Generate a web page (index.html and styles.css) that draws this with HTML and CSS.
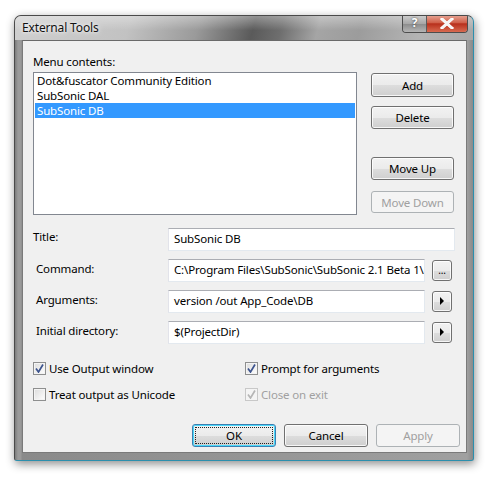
FILE: index.html
```html
<!DOCTYPE html>
<html>
<head>
<meta charset="utf-8">
<link rel="stylesheet" href="styles.css">
</head>
<body>
<div class="window">
  <div class="titlebar">
    <span class="title">External Tools</span>
    <div class="caption">
      <div class="cap-help">?</div>
      <div class="cap-close"><svg width="14" height="11" viewBox="0 0 14 11"><path d="M2 1 L12 10 M12 1 L2 10" stroke="#fff" stroke-width="3" stroke-linecap="square"/><path d="M2 1 L12 10 M12 1 L2 10" stroke="#f4f4f4" stroke-width="2"/></svg></div>
    </div>
  </div>
  <div class="frame">
    <div class="client">
      <div class="top">
        <div class="lbl menu-lbl">Menu contents:</div>
        <div class="listbox">
          <div class="item">Dot&amp;fuscator Community Edition</div>
          <div class="item">SubSonic DAL</div>
          <div class="item sel">SubSonic DB</div>
        </div>
        <div class="sidebtns">
          <div class="btn b-add">Add</div>
          <div class="btn b-del">Delete</div>
          <div class="btn b-up">Move Up</div>
          <div class="btn disabled b-down">Move Down</div>
        </div>
      </div>
      <div class="form">
        <div class="lbl flbl first">Title:</div>
        <div class="input wide">SubSonic DB</div>
        <div class="lbl flbl">Command:</div>
        <div class="input">C:\Program Files\SubSonic\SubSonic 2.1 Beta 1\</div>
        <div class="btn small">...</div>
        <div class="lbl flbl">Arguments:</div>
        <div class="input">version /out App_Code\DB</div>
        <div class="btn small"><svg width="6" height="8" viewBox="0 0 6 8"><path d="M1 0 L5 4 L1 8 Z" fill="#000"/></svg></div>
        <div class="lbl flbl">Initial directory:</div>
        <div class="input">$(ProjectDir)</div>
        <div class="btn small"><svg width="6" height="8" viewBox="0 0 6 8"><path d="M1 0 L5 4 L1 8 Z" fill="#000"/></svg></div>
      </div>
      <div class="checks">
        <label class="chk"><span class="box"><svg width="9" height="9" viewBox="0 0 9 9"><path d="M1 4.5 L3.5 8 L8 0.5" stroke="#3d548e" stroke-width="1.7" fill="none"/></svg></span>Use Output window</label>
        <label class="chk"><span class="box"><svg width="9" height="9" viewBox="0 0 9 9"><path d="M1 4.5 L3.5 8 L8 0.5" stroke="#3d548e" stroke-width="1.7" fill="none"/></svg></span>Prompt for arguments</label>
        <label class="chk"><span class="box"></span>Treat output as Unicode</label>
        <label class="chk dis"><span class="box"><svg width="9" height="9" viewBox="0 0 9 9"><path d="M1 4.5 L3.5 8 L8 0.5" stroke="#b5b5b5" stroke-width="1.7" fill="none"/></svg></span>Close on exit</label>
      </div>
      <div class="bottom">
        <div class="btn def"><span class="focus">OK</span></div>
        <div class="btn">Cancel</div>
        <div class="btn disabled">Apply</div>
      </div>
    </div>
  </div>
</div>
</body>
</html>
```
FILE: styles.css
```css
* { box-sizing: border-box; }
html, body { margin: 0; padding: 0; background: #fff; }
body {
  font-family: "Noto Sans", "Open Sans", sans-serif;
  font-size: 11.5px;
  letter-spacing: -0.15px;
  color: #000;
  width: 493px;
  height: 480px;
  overflow: hidden;
}
.window {
  margin: 15px 0 0 14px;
  width: 460px;
  height: 446px;
  border: 1px solid #4a4a4a;
  border-right-color: #2c8fad;
  border-bottom-color: #2c8fad;
  border-radius: 7px 7px 3px 3px;
  box-shadow: 1px 3px 10px rgba(0,0,0,0.45);
  display: flex;
  flex-direction: column;
  overflow: hidden;
  background: #8c8c8c;
}
.titlebar {
  height: 24px;
  flex: none;
  display: flex;
  justify-content: space-between;
  align-items: flex-start;
  padding-left: 7px;
  background:
    linear-gradient(180deg, rgba(255,255,255,0.35), rgba(255,255,255,0) 60%),
    linear-gradient(105deg, #cfcfcf 0%, #c2c2c2 25%, #9a9a9a 40%, #5a5a5a 52%, #6e6e6e 58%, #a5a5a5 66%, #9c9c9c 75%, #b4b4b4 88%, #a8a8a8 100%);
}
.title {
  padding-top: 4px;
  line-height: 15px;
  font-size: 12px;
  color: #111;
  text-shadow: 0 0 6px rgba(255,255,255,0.9), 0 0 3px rgba(255,255,255,0.9);
}
.caption {
  display: flex;
  margin: -1px 5px 0 0;
  height: 18px;
  border: 1px solid #4d4d4d;
  border-top: none;
  border-radius: 0 0 4px 4px;
  overflow: hidden;
}
.cap-help {
  width: 24px;
  background: linear-gradient(180deg, #d0d0d0 0%, #a8a8a8 50%, #8a8a8a 51%, #b5b5b5 100%);
  color: #fff;
  font-weight: bold;
  font-size: 12px;
  line-height: 16px;
  text-align: center;
  text-shadow: 0 0 2px #333;
  border-right: 1px solid #5a5a5a;
}
.cap-close {
  width: 40px;
  background: linear-gradient(180deg, #e8a898 0%, #d0604a 45%, #b8301c 52%, #d86a50 100%);
  display: flex;
  align-items: center;
  justify-content: center;
}
.frame {
  flex: 1;
  padding: 0 6px 7px 7px;
  background: linear-gradient(90deg, #7c7c7c 0px, #9a9a9a 3px, #9a9a9a 6px, #8a8a8a 7px, #a0a0a0 calc(100% - 6px), #8a8a8a 100%);
  display: flex;
}
.client {
  flex: 1;
  background: #f0f0f0;
  border: 1px solid #7a7a7a;
  border-top-color: #6a6a6a;
  padding: 13px 0 0 10px;
  display: flex;
  flex-direction: column;
}
.lbl { line-height: 15px; white-space: nowrap; }
.top {
  display: grid;
  grid-template-columns: 324px 83px;
  column-gap: 14px;
}
.menu-lbl { grid-column: 1 / 3; margin-bottom: 3px; }
.listbox {
  height: 143px;
  background: #fff;
  border: 1px solid #828790;
  padding: 0 1px;
}
.item {
  height: 15px;
  line-height: 15px;
  padding-left: 2px;
  white-space: nowrap;
}
.item.sel { background: #3399ff; color: #fff; }
.sidebtns {
  display: flex;
  flex-direction: column;
}
.btn {
  height: 23px;
  border: 1px solid #707070;
  border-radius: 3px;
  background: linear-gradient(180deg, #f2f2f2 0%, #ebebeb 50%, #dddddd 51%, #cfcfcf 100%);
  box-shadow: inset 0 0 0 1px rgba(255,255,255,0.8);
  display: flex;
  align-items: center;
  justify-content: center;
  line-height: 15px;
  white-space: nowrap;
}
.btn.disabled {
  border-color: #adb2b5;
  background: #f4f4f4;
  box-shadow: none;
  color: #a0a0a0;
}
.b-add { margin-top: 1px; height: 24px; }
.b-del { margin-top: 9px; }
.b-up { margin-top: 28px; }
.b-down { margin-top: 11px; height: 22px; }
.form {
  margin-top: 13px;
  display: grid;
  grid-template-columns: 135px 257px 7px 20px;
  column-gap: 0;
  row-gap: 8px;
  grid-auto-rows: 23px;
  width: 419px;
}
.form .lbl { grid-column: 1; padding-top: 2px; padding-left: 3px; }
.form .lbl.first { padding-left: 0; padding-top: 1px; }
.input {
  grid-column: 2;
  background: #fff;
  border: 1px solid #dbdfe6;
  border-top-color: #abadb3;
  border-left-color: #e2e3ea;
  border-right-color: #e3e9ef;
  border-bottom-color: #e3e9ef;
  padding-left: 5px;
  line-height: 20px;
  white-space: nowrap;
  overflow: hidden;
}
.input.wide { grid-column: 2 / 5; margin-right: -3px; }
.btn.small {
  grid-column: 4;
  width: 20px;
  height: 21px;
  margin-top: 1px;
  font-size: 10px;
  line-height: 10px;
  padding-bottom: 2px;
}
.checks {
  margin-top: 17px;
  display: grid;
  grid-template-columns: 212px auto;
  row-gap: 11px;
  grid-auto-rows: 15px;
}
.chk {
  display: flex;
  align-items: center;
  line-height: 15px;
  white-space: nowrap;
}
.box {
  width: 13px;
  height: 13px;
  border: 1px solid #8e8f8f;
  background: linear-gradient(135deg, #dcdcdc 0%, #f4f4f4 70%, #fff 100%);
  box-shadow: inset 0 0 0 1px #f4f4f4;
  margin-right: 3px;
  display: flex;
  align-items: center;
  justify-content: center;
  flex: none;
}
.chk.dis { color: #a0a0a0; }
.chk.dis .box { border-color: #c8c8c8; background: #f4f4f4; }
.bottom {
  margin-top: 22px;
  display: flex;
  gap: 8px;
  padding-left: 159px;
}
.bottom .btn { width: 84px; }
.btn.def {
  border-color: #3c7fb1;
  box-shadow: inset 0 0 0 1px #48d8fb;
  padding: 2px;
}
.focus {
  flex: 1;
  align-self: stretch;
  border: 1px dotted #222;
  display: flex;
  align-items: center;
  justify-content: center;
}
```
